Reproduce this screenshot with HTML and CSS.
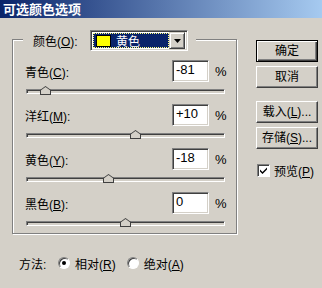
FILE: index.html
```html
<!DOCTYPE html>
<html>
  <head>
    <meta charset="utf-8" />
    <link rel="stylesheet" href="styles.css">
  </head>
  <body>
    <div class="titlebar">可选颜色选项</div>
    <div class="content">
      <div class="main">
        <div class="group">
          <div class="legend">
            <span class="legend-label">颜色(<u>O</u>):</span>
            <div class="select">
              <div class="select-value">
                <span class="swatch"></span>
                黄色
              </div>
              <span class="select-arrow">
                <svg width="7" height="4" viewBox="0 0 7 4"><path d="M0 0h7L3.5 4z" fill="#000"/></svg>
              </span>
            </div>
          </div>

          <div class="channel">
            <div class="channel-row">
              <span class="label">青色(<u>C</u>):</span>
              <span class="field">-81</span>
              <span class="unit">%</span>
            </div>
            <div class="slider">
              <span class="track"></span>
              <span class="thumb" style="left: 14px"></span>
            </div>
          </div>

          <div class="channel">
            <div class="channel-row">
              <span class="label">洋红(<u>M</u>):</span>
              <span class="field">+10</span>
              <span class="unit">%</span>
            </div>
            <div class="slider">
              <span class="track"></span>
              <span class="thumb" style="left: 104px"></span>
            </div>
          </div>

          <div class="channel">
            <div class="channel-row">
              <span class="label">黄色(<u>Y</u>):</span>
              <span class="field">-18</span>
              <span class="unit">%</span>
            </div>
            <div class="slider">
              <span class="track"></span>
              <span class="thumb" style="left: 77px"></span>
            </div>
          </div>

          <div class="channel">
            <div class="channel-row">
              <span class="label">黑色(<u>B</u>):</span>
              <span class="field">0</span>
              <span class="unit">%</span>
            </div>
            <div class="slider">
              <span class="track"></span>
              <span class="thumb" style="left: 94px"></span>
            </div>
          </div>
        </div>

        <div class="method">
          <span class="method-label">方法:</span>
          <span class="radio checked"></span>
          <span class="radio-text">相对(<u>R</u>)</span>
          <span class="radio"></span>
          <span class="radio-text">绝对(<u>A</u>)</span>
        </div>
      </div>

      <div class="side">
        <div class="button default">确定</div>
        <div class="button">取消</div>
        <div class="button gap">载入(<u>L</u>)...</div>
        <div class="button">存储(<u>S</u>)...</div>
        <div class="check">
          <span class="checkbox">
            <svg width="9" height="9" viewBox="0 0 9 9"><path d="M1 3.5l2.5 2.5L8 1.5v2L3.5 8 1 5.5z" fill="#000"/></svg>
          </span>
          <span class="check-text">预览(<u>P</u>)</span>
        </div>
      </div>
    </div>
  </body>
</html>
```

FILE: styles.css
```css
*{
  box-sizing: border-box;
}
body{
  margin: 0px;
  width: 322px;
  height: 288px;
  overflow: hidden;
  background: #d4d0c8;
  color: #000;
  font-family: "Liberation Sans", "Noto Sans CJK SC", sans-serif;
  font-size: 12px;
}
u{
  text-decoration: underline;
  text-underline-offset: 1px;
}
.titlebar{
  height: 18px;
  line-height: 18px;
  padding-left: 3px;
  background: linear-gradient(to right, #0a246a, #a6caf0);
  color: #fff;
  font-weight: bold;
  font-size: 13px;
  font-family: "Noto Sans CJK SC", sans-serif;
}
.content{
  display: flex;
}
.main{
  width: 238px;
}

/* group box */
.group{
  margin-top: 21px;
  margin-left: 12px;
  width: 225px;
  border: 1px solid #808080;
  box-shadow: inset 1px 1px #fff, 1px 1px #fff;
  padding: 0px 10px 5px 12px;
}
.legend{
  display: flex;
  align-items: center;
  width: fit-content;
  margin-top: -10px;
  margin-left: -2px;
  padding: 0px 8px 0px 10px;
  background: #d4d0c8;
}
.legend-label{
  width: 57px;
}
.select{
  display: flex;
  align-items: center;
  width: 98px;
  height: 21px;
  background: #fff;
  border: 1px solid;
  border-color: #808080 #fff #fff #808080;
  box-shadow: inset 1px 1px #404040, inset -1px -1px #d4d0c8;
  padding: 2px;
}
.select-value{
  flex: 1;
  height: 15px;
  display: flex;
  align-items: center;
  gap: 5px;
  padding-left: 3px;
  background: #0a246a;
  outline: 1px dotted #ffff80;
  outline-offset: -1px;
  color: #fff;
}
.swatch{
  width: 15px;
  height: 12px;
  background: #ffff00;
  border: 1px solid #000;
}
.select-arrow{
  width: 16px;
  height: 17px;
  display: flex;
  align-items: center;
  justify-content: center;
  background: #d4d0c8;
  border: 1px solid;
  border-color: #d4d0c8 #404040 #404040 #d4d0c8;
  box-shadow: inset 1px 1px #fff, inset -1px -1px #808080;
}

/* channels */
.channel{
  margin-bottom: 8px;
}
.legend + .channel{
  margin-top: 9px;
}
.channel:last-child{
  margin-bottom: 0px;
}
.channel-row{
  display: flex;
  align-items: center;
  height: 22px;
}
.label{
  flex: 1;
}
.field{
  width: 37px;
  height: 22px;
  line-height: 18px;
  padding-left: 3px;
  font-size: 13px;
  background: #fff;
  border: 1px solid;
  border-color: #808080 #fff #fff #808080;
  box-shadow: inset 1px 1px #404040, inset -1px -1px #d4d0c8;
}
.unit{
  width: 11px;
  margin-left: 6px;
  font-size: 13px;
}
.slider{
  position: relative;
  height: 10px;
  margin: 4px 0px 0px 1px;
  width: 199px;
}
.track{
  position: absolute;
  left: 0px;
  right: 0px;
  top: 3px;
  height: 5px;
  background: #d4d0c8;
  border: 1px solid;
  border-color: #808080 #fff #fff #808080;
  box-shadow: inset 1px 1px #404040;
}
.thumb{
  position: absolute;
  top: 0px;
  width: 11px;
  height: 9px;
  background: #404040;
  clip-path: polygon(50% 0, 100% 45%, 100% 100%, 0 100%, 0 45%);
}
.thumb::after{
  content: "";
  position: absolute;
  left: 1px;
  top: 1px;
  width: 9px;
  height: 7px;
  background: #d4d0c8;
  clip-path: polygon(50% 0, 100% 45%, 100% 100%, 0 100%, 0 45%);
}

/* method row */
.method{
  display: flex;
  align-items: center;
  height: 16px;
  margin-top: 21px;
  padding-left: 19px;
}
.method-label{
  width: 39px;
}
.radio{
  width: 12px;
  height: 12px;
  border-radius: 50%;
  background: #fff;
  border: 1px solid;
  border-color: #808080 #fff #fff #808080;
  box-shadow: inset 1px 1px #404040;
  display: flex;
  align-items: center;
  justify-content: center;
}
.radio.checked::after{
  content: "";
  width: 4px;
  height: 4px;
  border-radius: 50%;
  background: #000;
}
.radio-text{
  margin-left: 5px;
  margin-right: 11px;
}

/* right side */
.side{
  margin-left: 18px;
  margin-top: 22px;
  width: 62px;
}
.button{
  height: 22px;
  line-height: 20px;
  text-align: center;
  white-space: nowrap;
  margin-bottom: 4px;
  border: 1px solid;
  border-color: #fff #404040 #404040 #fff;
  box-shadow: inset -1px -1px #808080;
}
.button.default{
  border-color: #000;
  box-shadow: inset 1px 1px #fff, inset -1px -1px #404040, inset -2px -2px #808080;
}
.button.gap{
  margin-top: 13px;
}
.check{
  display: flex;
  align-items: center;
  gap: 4px;
  margin-top: 14px;
  margin-left: 1px;
  height: 14px;
  white-space: nowrap;
}
.check-text{
  flex: none;
}
.checkbox{
  flex: none;
  width: 13px;
  height: 13px;
  background: #fff;
  border: 1px solid;
  border-color: #808080 #fff #fff #808080;
  box-shadow: inset 1px 1px #404040;
  display: flex;
  align-items: center;
  justify-content: center;
}
```
